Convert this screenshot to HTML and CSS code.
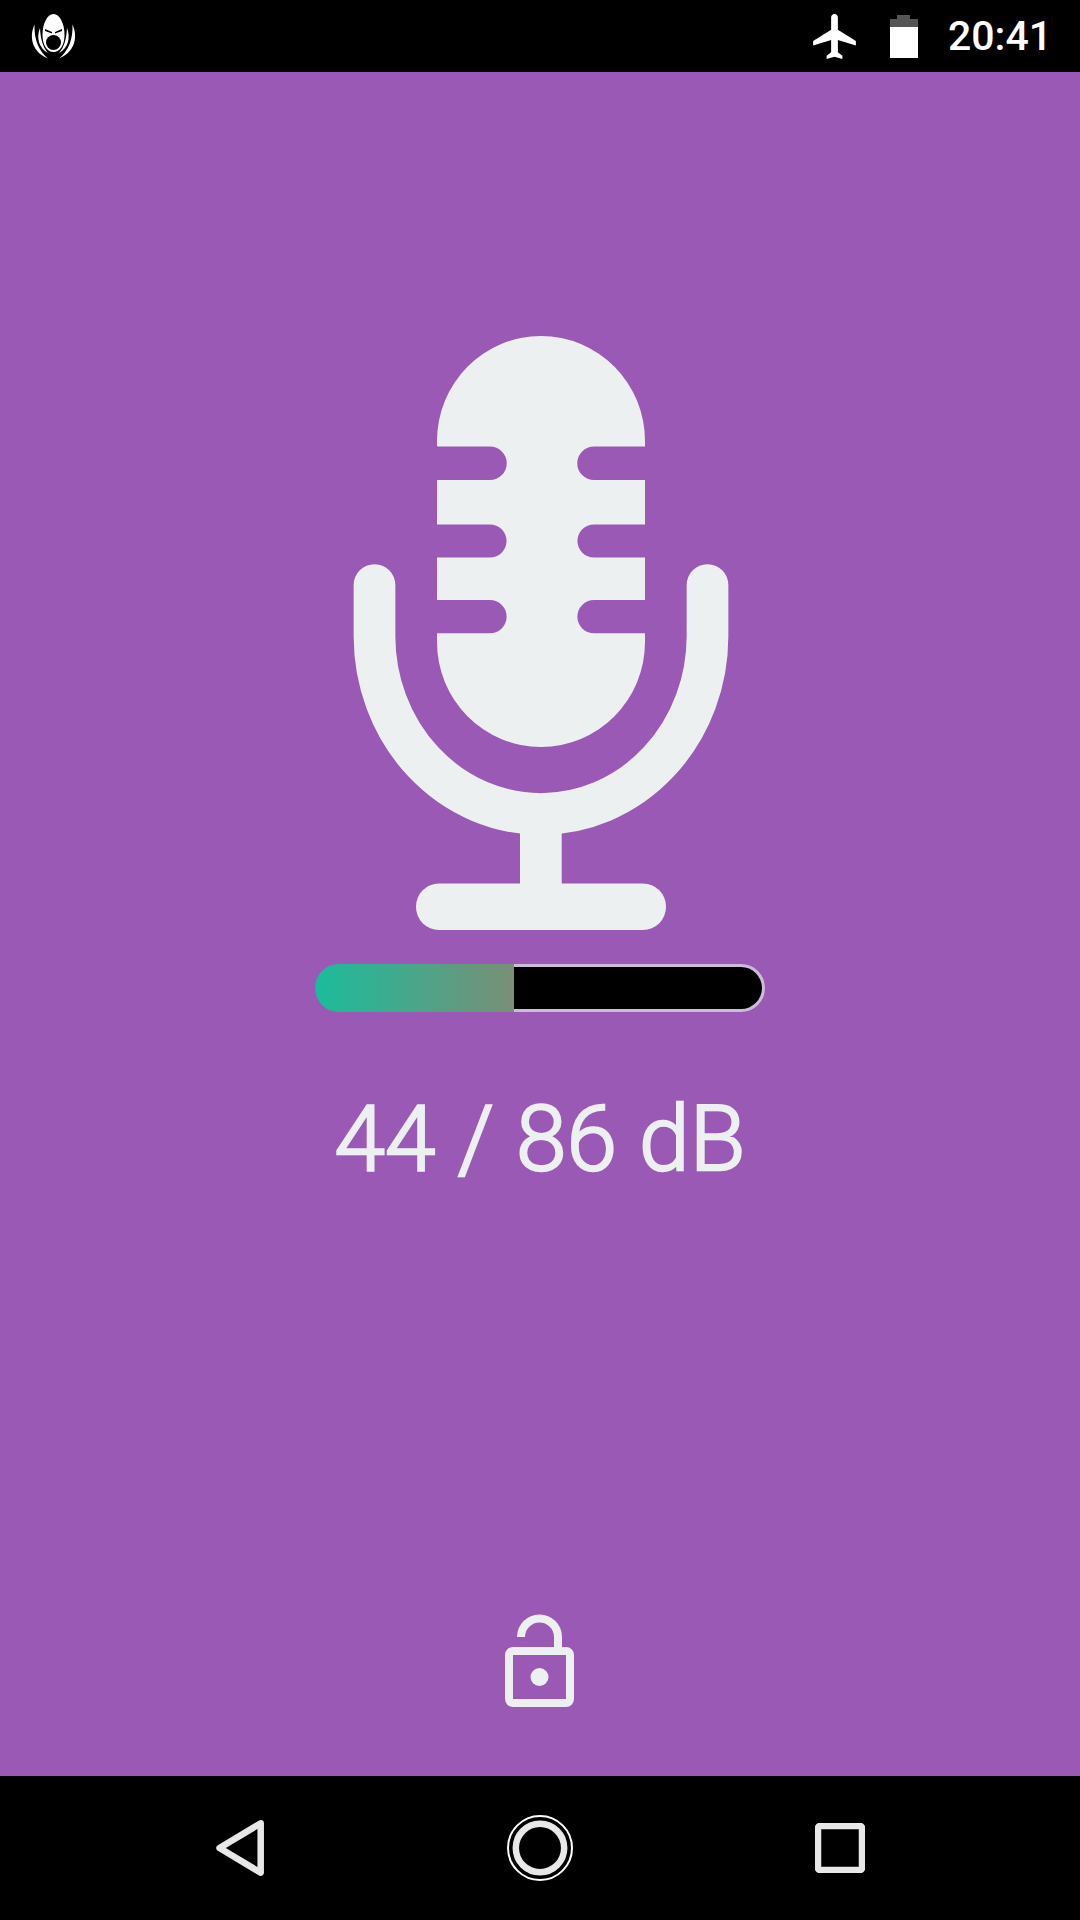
FILE: index.html
```html
<!DOCTYPE html>
<html lang="en">
<head>
    <meta charset="UTF-8">
    <meta name="viewport" content="width=device-width, initial-scale=1.0">
    <title>Sound Meter</title>
    <link rel="stylesheet" href="styles.css">
</head>
<body>

    <div class="status-bar">
        <svg class="app-icon" viewBox="24 8 60 54" width="60" height="54">
            <path class="icon-white" d="M53.500 13C47 13 42.500 23 42.500 34C42.500 44 47 51 53.500 51C60 51 64.500 44 64.500 34C64.500 23 60 13 53.500 13Z"/>
            <circle cx="53.500" cy="41.500" r="7.500" fill="#000"/>
            <path d="M45 28L52 31V32.500L45 30ZM62 28L55 31V32.500L62 30Z" fill="#000"/>
            <path class="icon-white" d="M40 27C36 37 39 47 48 52C42.500 46 40.500 37 40 27ZM67 27C71 37 68 47 59 52C64.500 46 66.500 37 67 27Z"/>
            <path class="icon-white" d="M34.500 23.500C28 38 34 52 48 57.500C38.500 50 34 38 34.500 23.500ZM72.500 23.500C79 38 73 52 59 57.500C68.500 50 73 38 72.500 23.500Z"/>
        </svg>
        <div class="status-right">
            <svg class="plane" viewBox="2 2 19 20" width="43" height="45">
                <path class="icon-white" d="M21 16v-2l-8-5V3.500c0-.83-.67-1.500-1.500-1.500S10 2.670 10 3.500V9l-8 5v2l8-2.500V19l-2 1.500V22l3.500-1 3.500 1v-1.500L13 19v-5.500l8 2.500z"/>
            </svg>
            <div class="battery">
                <div class="battery-nub"></div>
                <div class="battery-empty"></div>
                <div class="battery-level"></div>
            </div>
            <span class="clock">20:41</span>
        </div>
    </div>

    <div class="main">
        <svg class="mic" viewBox="330 320 420 620" width="420" height="620">
            <path d="M437 446.500V441A104 105 0 0 1 645 441V446.500H594A16.750 16.750 0 0 0 594 480H645V524.400H594A16.600 16.600 0 0 0 594 557.600H645V600H594A16.650 16.650 0 0 0 594 633.300H645V642A104 105 0 0 1 437 642V633.300H490A16.650 16.650 0 0 0 490 600H437V557.600H490A16.600 16.600 0 0 0 490 524.400H437V480H490A16.750 16.750 0 0 0 490 446.500Z"/>
            <path class="mic-cradle" d="M374.500 585V636A166.500 178 0 0 0 707.500 636V585"/>
            <rect x="520" y="820" width="41.700" height="80"/>
            <rect x="416" y="883.500" width="250" height="46.500" rx="23"/>
        </svg>

        <div class="meter">
            <div class="meter-fill"></div>
            <div class="meter-rest"></div>
        </div>

        <div class="reading">44 / 86 dB</div>

        <svg class="lock" viewBox="500 1610 80 100" width="80" height="100">
            <path class="lock-line" d="M521 1637A18.500 18.500 0 0 1 558 1637V1650"/>
            <rect class="lock-line" x="509" y="1651" width="61" height="52" rx="4"/>
            <circle cx="539.500" cy="1677" r="9"/>
        </svg>
    </div>

    <div class="nav-bar">
        <svg class="nav-icon nav-back" viewBox="0 0 60 64" width="60" height="64">
            <path d="M50.700 7.300L9.500 32L50.700 56.700Z"/>
        </svg>
        <svg class="nav-icon nav-home" viewBox="0 0 70 70" width="70" height="70">
            <circle class="home-outer" cx="35" cy="35" r="32"/>
            <circle cx="35" cy="35" r="24.200"/>
        </svg>
        <svg class="nav-icon" viewBox="0 0 50 50" width="50" height="50">
            <rect x="3" y="3" width="44" height="44" rx="2"/>
        </svg>
    </div>

</body>
</html>
```

FILE: styles.css
```css
body {
    margin: 0;
    width: 1080px;
    height: 1920px;
    display: flex;
    flex-direction: column;
    background-color: #9b59b6;
    font-family: Roboto, sans-serif;
    overflow: hidden;
}

.icon-white {
    fill: #fff;
}

.status-bar {
    height: 72px;
    flex-shrink: 0;
    background-color: #000;
    display: flex;
    justify-content: space-between;
    align-items: center;
    padding: 0 28px 0 24px;
    color: #fff;
}

.status-right {
    display: flex;
    align-items: center;
}

.plane {
    margin-right: 34px;
}

.battery {
    width: 28px;
    height: 43px;
    margin-right: 30px;
    display: flex;
    flex-direction: column;
    align-items: center;
}

.battery-nub {
    width: 13px;
    height: 4px;
    background-color: #555;
}

.battery-empty {
    width: 100%;
    height: 8px;
    background-color: #555;
}

.battery-level {
    width: 100%;
    flex: 1;
    background-color: #fff;
}

.clock {
    font-size: 41px;
    font-weight: 500;
    line-height: 72px;
}

.main {
    flex: 1;
    display: flex;
    flex-direction: column;
    align-items: center;
    padding-top: 248px;
    box-sizing: border-box;
}

.mic {
    fill: #ecf0f1;
    flex-shrink: 0;
}

.mic-cradle {
    fill: none;
    stroke: #ecf0f1;
    stroke-width: 41.7px;
    stroke-linecap: round;
}

.meter {
    width: 450px;
    height: 48px;
    margin-top: 24px;
    display: flex;
}

.meter-fill {
    width: 199px;
    border-radius: 24px 0 0 24px;
    background: linear-gradient(to right, #1abc9c, #7a8f77);
}

.meter-rest {
    flex: 1;
    box-sizing: border-box;
    background-color: #000;
    border: 3px solid #cbbdd8;
    border-left: none;
    border-radius: 0 24px 24px 0;
}

.reading {
    margin-top: 73px;
    font-size: 91px;
    font-weight: 300;
    -webkit-text-stroke: 2.4px #ecf0f1;
    line-height: 108px;
    color: #ecf0f1;
}

.lock {
    margin-top: auto;
    margin-bottom: 66px;
    fill: #ecf0f1;
}

.lock-line {
    fill: none;
    stroke: #ecf0f1;
    stroke-width: 8px;
}

.nav-bar {
    height: 144px;
    flex-shrink: 0;
    background-color: #000;
    display: flex;
    align-items: center;
    padding-left: 210px;
}

.nav-icon {
    fill: none;
    stroke: #e8e8e8;
    stroke-width: 6.5px;
    stroke-linejoin: round;
}

.nav-back {
    margin-right: 235px;
}

.nav-home {
    margin-right: 240px;
}

.home-outer {
    stroke: #fff;
    stroke-width: 2px;
}
```
